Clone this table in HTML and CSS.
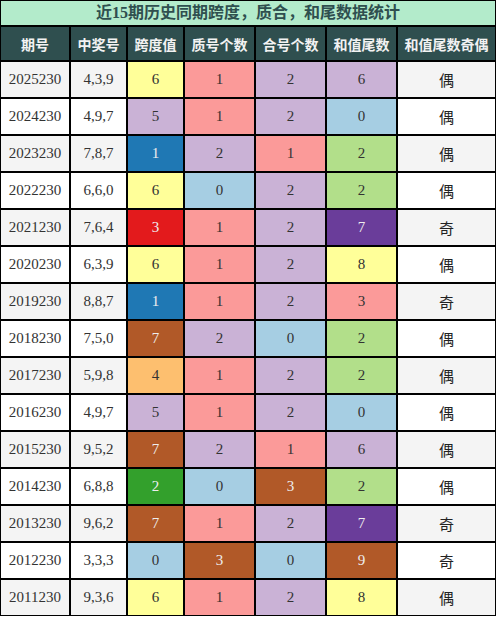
FILE: index.html
```html
<!DOCTYPE html>
<html lang="zh">
<head>
<meta charset="utf-8">
<title>近15期历史同期跨度，质合，和尾数据统计</title>
<link rel="stylesheet" href="styles.css">
</head>
<body>
<div class="wrap">
  <div class="title">近15期历史同期跨度，质合，和尾数据统计</div>
  <div class="grid">
    <div class="cell head">期号</div>
    <div class="cell head">中奖号</div>
    <div class="cell head">跨度值</div>
    <div class="cell head">质号个数</div>
    <div class="cell head">合号个数</div>
    <div class="cell head">和值尾数</div>
    <div class="cell head">和值尾数奇偶</div>

    <div class="cell alt">2025230</div><div class="cell alt">4,3,9</div>
    <div class="cell c-yel">6</div><div class="cell c-pnk">1</div><div class="cell c-lav">2</div><div class="cell c-lav">6</div>
    <div class="cell alt cjk">偶</div>

    <div class="cell">2024230</div><div class="cell">4,9,7</div>
    <div class="cell c-lav">5</div><div class="cell c-pnk">1</div><div class="cell c-lav">2</div><div class="cell c-lbl">0</div>
    <div class="cell cjk">偶</div>

    <div class="cell alt">2023230</div><div class="cell alt">7,8,7</div>
    <div class="cell c-blu">1</div><div class="cell c-lav">2</div><div class="cell c-pnk">1</div><div class="cell c-lgr">2</div>
    <div class="cell alt cjk">偶</div>

    <div class="cell">2022230</div><div class="cell">6,6,0</div>
    <div class="cell c-yel">6</div><div class="cell c-lbl">0</div><div class="cell c-lav">2</div><div class="cell c-lgr">2</div>
    <div class="cell cjk">偶</div>

    <div class="cell alt">2021230</div><div class="cell alt">7,6,4</div>
    <div class="cell c-red">3</div><div class="cell c-pnk">1</div><div class="cell c-lav">2</div><div class="cell c-pur">7</div>
    <div class="cell alt cjk">奇</div>

    <div class="cell">2020230</div><div class="cell">6,3,9</div>
    <div class="cell c-yel">6</div><div class="cell c-pnk">1</div><div class="cell c-lav">2</div><div class="cell c-yel">8</div>
    <div class="cell cjk">偶</div>

    <div class="cell alt">2019230</div><div class="cell alt">8,8,7</div>
    <div class="cell c-blu">1</div><div class="cell c-pnk">1</div><div class="cell c-lav">2</div><div class="cell c-pnk">3</div>
    <div class="cell alt cjk">奇</div>

    <div class="cell">2018230</div><div class="cell">7,5,0</div>
    <div class="cell c-brn">7</div><div class="cell c-lav">2</div><div class="cell c-lbl">0</div><div class="cell c-lgr">2</div>
    <div class="cell cjk">偶</div>

    <div class="cell alt">2017230</div><div class="cell alt">5,9,8</div>
    <div class="cell c-org">4</div><div class="cell c-pnk">1</div><div class="cell c-lav">2</div><div class="cell c-lgr">2</div>
    <div class="cell alt cjk">偶</div>

    <div class="cell">2016230</div><div class="cell">4,9,7</div>
    <div class="cell c-lav">5</div><div class="cell c-pnk">1</div><div class="cell c-lav">2</div><div class="cell c-lbl">0</div>
    <div class="cell cjk">偶</div>

    <div class="cell alt">2015230</div><div class="cell alt">9,5,2</div>
    <div class="cell c-brn">7</div><div class="cell c-lav">2</div><div class="cell c-pnk">1</div><div class="cell c-lav">6</div>
    <div class="cell alt cjk">偶</div>

    <div class="cell">2014230</div><div class="cell">6,8,8</div>
    <div class="cell c-dgr">2</div><div class="cell c-lbl">0</div><div class="cell c-brn">3</div><div class="cell c-lgr">2</div>
    <div class="cell cjk">偶</div>

    <div class="cell alt">2013230</div><div class="cell alt">9,6,2</div>
    <div class="cell c-brn">7</div><div class="cell c-pnk">1</div><div class="cell c-lav">2</div><div class="cell c-pur">7</div>
    <div class="cell alt cjk">奇</div>

    <div class="cell">2012230</div><div class="cell">3,3,3</div>
    <div class="cell c-lbl">0</div><div class="cell c-brn">3</div><div class="cell c-lbl">0</div><div class="cell c-brn">9</div>
    <div class="cell cjk">奇</div>

    <div class="cell alt">2011230</div><div class="cell alt">9,3,6</div>
    <div class="cell c-yel">6</div><div class="cell c-pnk">1</div><div class="cell c-lav">2</div><div class="cell c-yel">8</div>
    <div class="cell alt cjk">偶</div>
  </div>
</div>
</body>
</html>
```

FILE: styles.css
```css
* { box-sizing: border-box; }
html, body { margin: 0; padding: 0; background: #fff; }
body { font-family: "Liberation Serif", "Noto Sans CJK SC", serif; color: #333; }
.wrap { width: 496px; }
.title {
  height: 26px;
  border: 1px solid #000;
  background: #b3ebcb;
  color: #2f4f4f;
  font-weight: bold;
  font-size: 16px;
  line-height: 23px;
  text-align: center;
}
.grid {
  display: grid;
  grid-template-columns: 70px 57px 57px 71px 71px 71px 99px;
  grid-template-rows: 35px;
  grid-auto-rows: 37px;
}
.cell {
  border: 1px solid #000;
  display: flex;
  align-items: center;
  justify-content: center;
  font-size: 15px;
  background: #fff;
  color: #333;
}
.head {
  background: #2f4f4f;
  color: #f2f2f2;
  font-family: "Noto Sans CJK SC", sans-serif;
  font-weight: bold;
  font-size: 14px;
}
.alt { background: #f4f4f4; }
.cjk { font-family: "Noto Sans CJK SC", sans-serif; font-size: 15px; color: #222; }
.c-yel { background: #ffff99; }
.c-pnk { background: #fb9a99; }
.c-lav { background: #cab2d6; }
.c-lbl { background: #a6cee3; }
.c-lgr { background: #b2df8a; }
.c-org { background: #fdbf6f; }
.c-blu { background: #1f78b4; color: #eee; }
.c-red { background: #e31a1c; color: #eee; }
.c-brn { background: #b15928; color: #eee; }
.c-pur { background: #6a3d9a; color: #eee; }
.c-dgr { background: #33a02c; color: #eee; }
```
